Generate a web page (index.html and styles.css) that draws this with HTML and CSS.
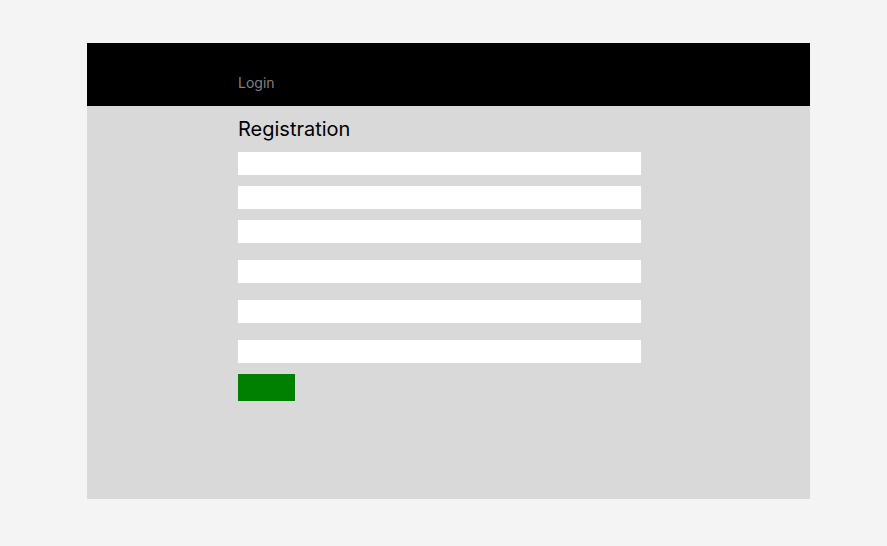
FILE: index.html
```html
<!DOCTYPE html>
<html lang="en">
<head>
<meta charset="utf-8">
<title>Registration</title>
<link rel="stylesheet" href="styles.css">
</head>
<body>
<div class="frame">
  <header class="topbar">
    <a class="login-link" href="#">Login</a>
  </header>
  <main class="content">
    <h1 class="title">Registration</h1>
    <form class="form">
      <input class="field" type="text">
      <input class="field" type="text">
      <input class="field" type="email">
      <input class="field field-wide" type="text">
      <input class="field field-wide" type="password">
      <input class="field field-wide" type="password">
      <button class="submit" type="button"></button>
    </form>
  </main>
</div>
</body>
</html>
```

FILE: styles.css
```css
* { box-sizing: border-box; }
html, body { margin: 0; padding: 0; }
body {
  background: #f4f4f4;
  font-family: "Inter", "Noto Sans", sans-serif;
  padding: 43px 0 0 87px;
}
.frame {
  width: 723px;
  height: 456px;
  background: #d9d9d9;
  display: flex;
  flex-direction: column;
}
.topbar {
  height: 63px;
  background: #000;
  display: flex;
  align-items: flex-end;
  padding: 0 0 15px 151px;
}
.login-link {
  font-size: 14px;
  line-height: 17px;
  color: #808080;
  text-decoration: none;
}
.content {
  padding-left: 151px;
}
.title {
  margin: 11px 0 11px;
  font-size: 20px;
  line-height: 24px;
  font-weight: 400;
  color: #000;
}
.form {
  display: flex;
  flex-direction: column;
  align-items: flex-start;
}
.field {
  display: block;
  width: 403px;
  height: 23px;
  border: 0;
  padding: 0;
  margin: 0 0 11px;
  background: #fff;
}
.field-wide { margin-top: 6px; }
.submit {
  width: 57px;
  height: 27px;
  border: 0;
  padding: 0;
  background: #008000;
}
```
